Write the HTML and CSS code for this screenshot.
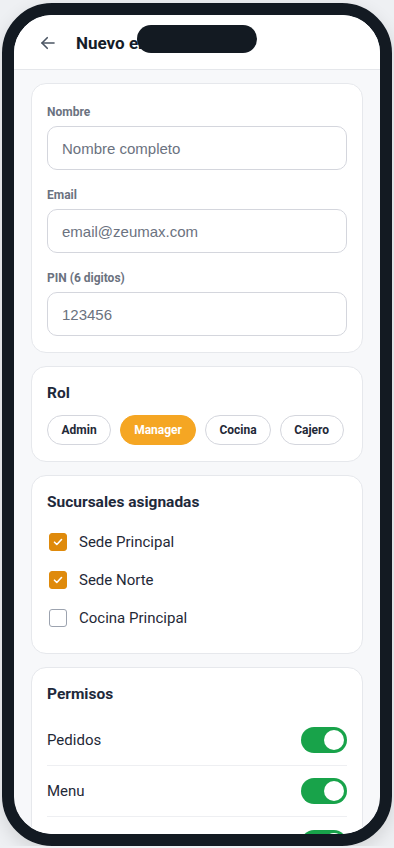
FILE: index.html
```html
<!DOCTYPE html>
<html lang="es">
<head>
    <meta charset="UTF-8">
    <meta name="viewport" content="width=device-width, initial-scale=1.0">
    <title>Nuevo empleado</title>
    <link rel="stylesheet" href="styles.css">
</head>
<body>
    <div class="phone">
        <div class="notch"></div>
        <div class="screen">
            <header class="topbar">
                <button class="back" aria-label="Volver">
                    <svg width="18" height="18" viewBox="0 0 24 24" fill="none" stroke="currentColor" stroke-width="2.2" stroke-linecap="round" stroke-linejoin="round">
                        <path d="M20 12H4"/>
                        <path d="M11 5l-7 7 7 7"/>
                    </svg>
                </button>
                <h1>Nuevo empleado</h1>
            </header>

            <main class="content">
                <section class="card">
                    <div class="field">
                        <label for="nombre">Nombre</label>
                        <input type="text" id="nombre" placeholder="Nombre completo">
                    </div>
                    <div class="field">
                        <label for="email">Email</label>
                        <input type="email" id="email" placeholder="email@zeumax.com">
                    </div>
                    <div class="field">
                        <label for="pin">PIN (6 digitos)</label>
                        <input type="text" id="pin" placeholder="123456">
                    </div>
                </section>

                <section class="card">
                    <h2>Rol</h2>
                    <div class="chips">
                        <button class="chip">Admin</button>
                        <button class="chip active">Manager</button>
                        <button class="chip">Cocina</button>
                        <button class="chip">Cajero</button>
                    </div>
                </section>

                <section class="card">
                    <h2>Sucursales asignadas</h2>
                    <label class="check-row">
                        <span class="box checked">
                            <svg width="12" height="12" viewBox="0 0 12 12" fill="none" stroke="#fff" stroke-width="1.6" stroke-linecap="round" stroke-linejoin="round"><path d="M2.5 6.2l2.3 2.3 4.7-5"/></svg>
                        </span>
                        Sede Principal
                    </label>
                    <label class="check-row">
                        <span class="box checked">
                            <svg width="12" height="12" viewBox="0 0 12 12" fill="none" stroke="#fff" stroke-width="1.6" stroke-linecap="round" stroke-linejoin="round"><path d="M2.5 6.2l2.3 2.3 4.7-5"/></svg>
                        </span>
                        Sede Norte
                    </label>
                    <label class="check-row">
                        <span class="box"></span>
                        Cocina Principal
                    </label>
                </section>

                <section class="card">
                    <h2>Permisos</h2>
                    <div class="perm-row">
                        <span>Pedidos</span>
                        <span class="toggle on"><span class="knob"></span></span>
                    </div>
                    <div class="perm-row">
                        <span>Menu</span>
                        <span class="toggle on"><span class="knob"></span></span>
                    </div>
                    <div class="perm-row">
                        <span></span>
                        <span class="toggle on"><span class="knob"></span></span>
                    </div>
                </section>
            </main>
        </div>
    </div>
</body>
</html>
```

FILE: styles.css
```css
* {
    margin: 0;
    padding: 0;
    box-sizing: border-box;
}

body {
    background: #eef0f3;
    font-family: Roboto, "Noto Sans", sans-serif;
    color: #1f2937;
}

.phone {
    position: relative;
    width: 390px;
    height: 843px;
    margin: 3px 2px 0;
    border: 12px solid #131a22;
    border-radius: 50px;
    overflow: hidden;
    box-shadow: 0 6px 18px rgba(0, 0, 0, 0.12);
}

.notch {
    position: absolute;
    top: 10px;
    left: 123px;
    width: 120px;
    height: 28px;
    border-radius: 14px;
    background: #131a22;
    z-index: 5;
}

.screen {
    height: 100%;
    background: #f7f8fa;
    overflow: hidden;
    border-radius: 38px;
}

.topbar {
    height: 55px;
    background: #fff;
    border-bottom: 1px solid #e5e7eb;
    display: flex;
    align-items: center;
    padding: 0 0 0 25px;
    gap: 19px;
}

.back {
    border: none;
    background: none;
    color: #4b5563;
    display: flex;
    padding: 0;
    margin-top: 2px;
}

.topbar h1 {
    font-size: 17px;
    font-weight: 700;
    color: #151c28;
    margin-top: 2px;
}

.content {
    padding: 13px 17px;
    display: flex;
    flex-direction: column;
    gap: 13px;
}

.card {
    background: #fff;
    border: 1px solid #e6e8ec;
    border-radius: 15px;
    padding: 16px 15px;
}

.field + .field {
    margin-top: 17px;
}

.card:first-child {
    padding-top: 20px;
}

.field label {
    display: block;
    font-size: 12px;
    line-height: 16px;
    font-weight: 700;
    color: #6b7280;
    margin-bottom: 6px;
}

.field input {
    width: 100%;
    height: 44px;
    border: 1px solid #d4d6dd;
    border-radius: 10px;
    padding: 0 14px;
    font-family: "Liberation Sans", Arial, sans-serif;
    font-size: 15px;
    color: #1f2937;
    outline: none;
}

.field input::placeholder {
    color: #6b7280;
}

.card h2 {
    font-size: 15.5px;
    line-height: 20px;
    font-weight: 700;
    color: #1e293b;
    margin-bottom: 12px;
}

.chips {
    display: flex;
    gap: 8.5px;
}

.chip {
    height: 30px;
    padding: 0 13.5px;
    border: 1px solid #d4d6dd;
    border-radius: 15px;
    background: #fff;
    font-family: Roboto, "Noto Sans", sans-serif;
    font-size: 12px;
    font-weight: 700;
    color: #1f2937;
}

.chip.active {
    background: #f5a623;
    border-color: #f5a623;
    color: #fff;
}

.check-row {
    display: flex;
    align-items: center;
    gap: 12px;
    height: 38px;
    padding-left: 2px;
    font-size: 15px;
    color: #1f2937;
}

.card h2 + .check-row {
    margin-top: -1px;
}

.box {
    width: 18px;
    height: 18px;
    border: 1.5px solid #9ca3af;
    border-radius: 3px;
    display: flex;
    align-items: center;
    justify-content: center;
}

.box.checked {
    background: #df8a0b;
    border-color: #df8a0b;
}

.perm-row {
    display: flex;
    align-items: center;
    justify-content: space-between;
    height: 51px;
    border-bottom: 1px solid #eeeff2;
    font-size: 15px;
    color: #1f2937;
}

.card h2 + .perm-row {
    margin-top: -1px;
}

.perm-row:last-child {
    border-bottom: none;
}

.toggle {
    width: 46px;
    height: 26px;
    border-radius: 13px;
    background: #d1d5db;
    display: flex;
    align-items: center;
    padding: 0 3px;
}

.toggle.on {
    background: #18a34a;
    justify-content: flex-end;
}

.knob {
    width: 20px;
    height: 20px;
    border-radius: 50%;
    background: #fff;
}
```
